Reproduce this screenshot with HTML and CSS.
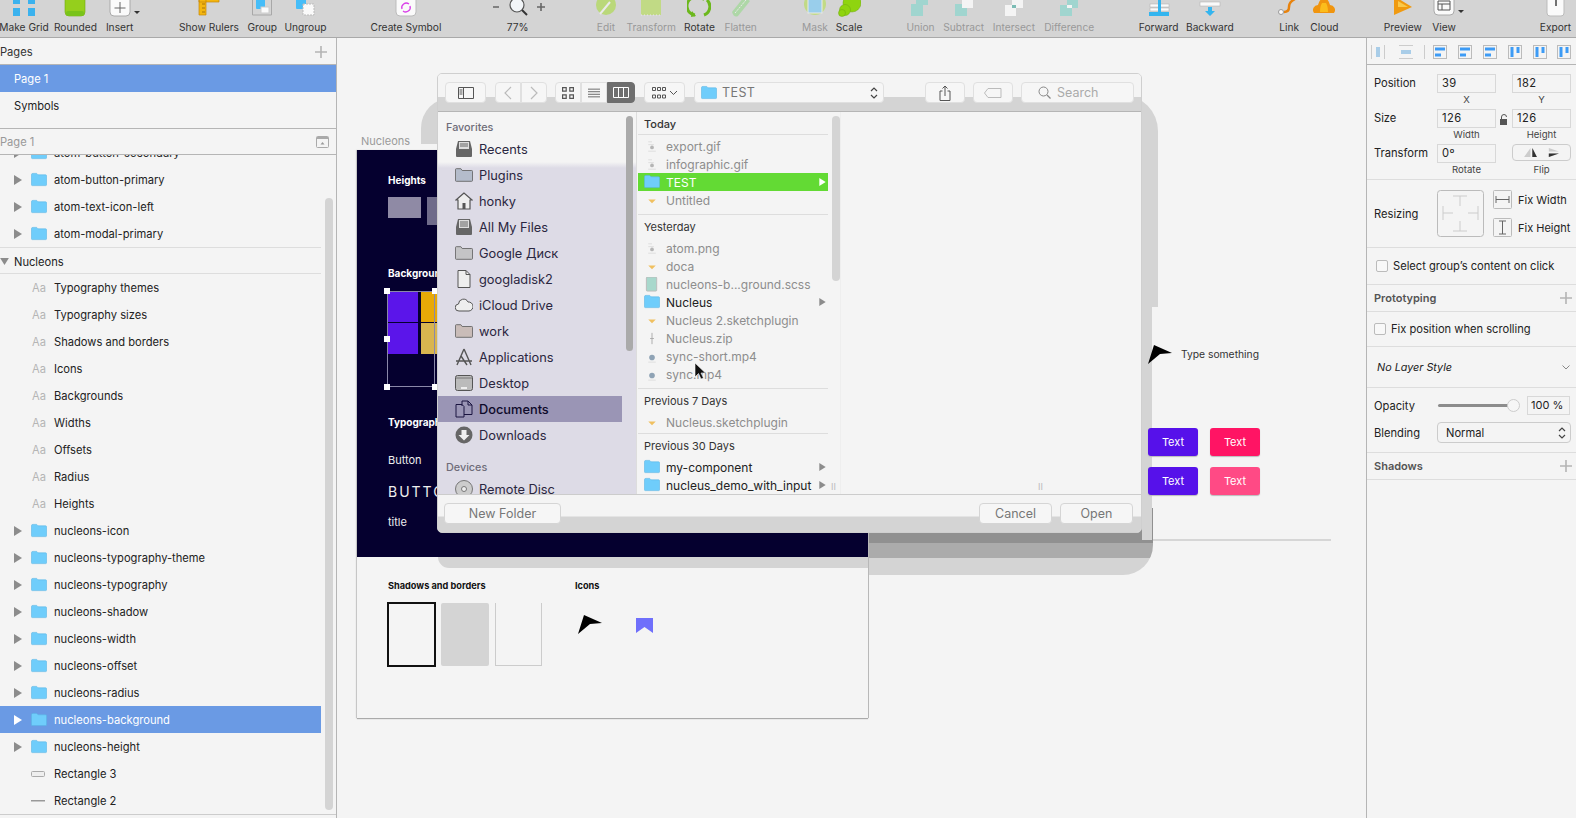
FILE: index.html
```html
<!DOCTYPE html>
<html>
<head>
    <meta charset="utf-8">
    <title>Sketch - Nucleus</title>
    <link rel="stylesheet" href="styles.css">
</head>
<body>
<svg class="defs" width="0" height="0">
    <symbol id="folder" viewBox="0 0 17 15">
        <path d="M.5 2.500Q.5 1 2 1h4l1.500 1.500h8q1 0 1 1V13q0 1-1 1H1.500q-1 0-1-1z" fill="#6fcdfb" stroke="#58b4e4" stroke-width=".6"/>
    </symbol>
    <symbol id="tri" viewBox="0 0 8 10"><path d="M0 0l8 5-8 5z"/></symbol>
    <symbol id="dfile" viewBox="0 0 14 16">
        <path d="M3 7h8l-4 4z" fill="#f0c060"/>
    </symbol>
    <symbol id="gfile" viewBox="0 0 14 16">
        <path d="M3 3h4M3 6h6M3 13h8" stroke="#ddd" fill="none"/><circle cx="7" cy="9" r="2" fill="#b5b5b5"/>
    </symbol>
    <symbol id="vfile" viewBox="0 0 14 16">
        <path d="M3 14h8" stroke="#ddd"/><circle cx="7" cy="9" r="3" fill="#8fa3b5"/>
    </symbol>
    <symbol id="gfolder" viewBox="0 0 20 16">
        <path d="M.5 14V2q0-1 1-1h5l1.500 2h10.500q1 0 1 1v10q0 1-1 1h-17q-1 0-1-1z" fill="currentColor" stroke="#666"/>
    </symbol>
    <symbol id="plus" viewBox="0 0 12 12"><path d="M6 0v12M0 6h12" stroke="#b4b4b4" stroke-width="1.600"/></symbol>
    <symbol id="alignh" viewBox="0 0 14 14">
        <rect x=".5" y=".5" width="13" height="13" fill="none" stroke="#bbb"/><rect x="2" y="2.500" width="10" height="3" fill="#3d9bf5"/><rect x="2" y="8.500" width="6" height="3" fill="#3d9bf5"/>
    </symbol>
    <symbol id="alignv" viewBox="0 0 14 14">
        <rect x=".5" y=".5" width="13" height="13" fill="none" stroke="#bbb"/><rect x="2.500" y="2" width="3" height="10" fill="#3d9bf5"/><rect x="8.500" y="2" width="3" height="6" fill="#3d9bf5"/>
    </symbol>
</svg>

<div class="toolbar">
    <div class="tool"><svg viewBox="0 0 24 17"><path d="M1 -3h7v7H1zM16-3h7v7h-7zM1 8h7v8H1zM16 8h7v8h-7z" fill="#3bb2ee"/></svg><span>Make Grid</span></div>
    <div class="tool"><svg viewBox="0 0 24 17"><rect x="2" y="-8" width="20" height="24" rx="4" fill="#95cf1c" stroke="#6ea80f" stroke-width=".6"/><rect x="3" y="11" width="18" height="5" rx="2" fill="#79c31a"/></svg><span>Rounded</span></div>
    <div class="tool"><svg viewBox="0 0 32 17"><rect x="2" y="-8" width="20" height="24" rx="4" fill="#fafafa" stroke="#aaa"/><path d="M12 2v11M6.500 8h11" stroke="#666"/><path d="M26 11h6l-3 3z" fill="#333"/></svg><span>Insert</span></div>
    <div class="tool"><svg viewBox="0 0 24 17"><path d="M2-4h7v19H2zM2-4h20v6H2z" fill="#f4b60f" stroke="#c4870a" stroke-width=".7"/><path d="M5 4h3M5 8h3M5 12h3" stroke="#a8740a"/></svg><span>Show Rulers</span></div>
    <div class="tool"><svg viewBox="0 0 24 17"><path d="M2.500-2v17h19V-2" fill="none" stroke="#a8a8a8"/><rect x="6" y="-4" width="9" height="13" rx="1" fill="#46bdf8"/><rect x="11" y="7" width="8" height="6" fill="#fafafa" stroke="#ccc"/></svg><span>Group</span></div>
    <div class="tool"><svg viewBox="0 0 24 17"><rect x="3" y="-4" width="10" height="13" rx="1" fill="#46bdf8"/><rect x="10" y="4" width="11" height="11" fill="#fafafa" stroke="#bbb" stroke-dasharray="2 1"/></svg><span>Ungroup</span></div>
    <div class="tool"><svg viewBox="0 0 24 17"><rect x="2" y="-6" width="20" height="22" rx="4" fill="#fafafa" stroke="#bbb"/><path d="M8 9a4.500 4.500 0 0 1 7-5M16 6a4.500 4.500 0 0 1-7 5" fill="none" stroke="#d93fe8" stroke-width="1.300"/></svg><span>Create Symbol</span></div>
    <div class="tool"><svg class="wide" viewBox="0 0 56 17"><path d="M3 7h6M47 7h8M51 3v8" stroke="#666" stroke-width="1.600" fill="none"/><circle cx="27" cy="5" r="7" fill="#f2f5f8" stroke="#555" stroke-width="1.200"/><path d="M32 10l5 5" stroke="#333" stroke-width="2"/></svg><span>77%</span></div>
    <div class="tool off"><svg viewBox="0 0 24 17"><circle cx="12" cy="5" r="10" fill="#b6d96b"/><path d="M6 14L16 2" stroke="#eee" stroke-width="2"/></svg><span>Edit</span></div>
    <div class="tool off"><svg viewBox="0 0 24 17"><rect x="2" y="-6" width="20" height="21" fill="#bedc78"/><path d="M2 15h20" stroke="#eee" stroke-dasharray="1 2"/></svg><span>Transform</span></div>
    <div class="tool on"><svg viewBox="0 0 24 17"><path d="M8 15A9 9 0 0 1 5-2M17 15a9 9 0 0 0 3-15" fill="none" stroke="#6cb81c" stroke-width="3"/><path d="M5 11l4 5-5 1zM14-4l5 2-3 3z" fill="#6cb81c"/></svg><span>Rotate</span></div>
    <div class="tool off"><svg viewBox="0 0 24 17"><path d="M3 12L15-3l6 4L9 16q-4 2-6-4z" fill="#a8d8a0"/><path d="M6 13L17 0" stroke="#eee" stroke-dasharray="2 1"/></svg><span>Flatten</span></div>
    <div class="tool off"><svg viewBox="0 0 24 17"><circle cx="12" cy="4" r="11" fill="#bedc78"/><rect x="5" y="-4" width="14" height="17" fill="#8fcdf0" stroke="#eee"/></svg><span>Mask</span></div>
    <div class="tool on"><svg viewBox="0 0 24 17"><circle cx="15" cy="3" r="9" fill="#8fd40f" stroke="#6ea80f" stroke-width=".5"/><circle cx="8" cy="10" r="5.500" fill="#8fd40f" stroke="#6ea80f" stroke-width=".5"/><circle cx="5" cy="13" r="3.500" fill="#8fd40f" stroke="#6ea80f" stroke-width=".5"/></svg><span>Scale</span></div>
    <div class="tool off"><svg viewBox="0 0 24 17"><path d="M8 4V-2h12v7h-5v11H3V4z" fill="#97d6cf"/></svg><span>Union</span></div>
    <div class="tool off"><svg viewBox="0 0 24 17"><path d="M3 4h12v12H3z" fill="#97d6cf"/><rect x="10" y="-3" width="11" height="11" fill="#fafafa"/></svg><span>Subtract</span></div>
    <div class="tool off"><svg viewBox="0 0 24 17"><rect x="3" y="5" width="11" height="11" fill="#fafafa"/><rect x="10" y="-3" width="11" height="11" fill="#fafafa"/><rect x="10" y="5" width="4" height="3" fill="#6db8b0"/></svg><span>Intersect</span></div>
    <div class="tool off"><svg viewBox="0 0 24 17"><path d="M3 5h12v11H3zM10-3h11v11H10z" fill="#97d6cf"/><rect x="10" y="5" width="5" height="3" fill="#fafafa"/></svg><span>Difference</span></div>
    <div class="tool on"><svg viewBox="0 0 24 17"><rect x="3" y="4" width="19" height="3" fill="#fafafa" stroke="#aaa" stroke-width=".5"/><rect x="3" y="8" width="19" height="3" fill="#fafafa" stroke="#aaa" stroke-width=".5"/><path d="M11-2h3v14h-3z" fill="#33b5ef"/><rect x="2" y="12" width="20" height="4" fill="#33b5ef"/></svg><span>Forward</span></div>
    <div class="tool on"><svg viewBox="0 0 24 17"><path d="M2-2h20v2H2z" fill="#33b5ef"/><rect x="2" y="2" width="20" height="4" fill="#fafafa" stroke="#aaa" stroke-width=".5"/><path d="M10 7h4v4h3l-5 5-5-5h3z" fill="#33b5ef"/></svg><span>Backward</span></div>
    <div class="tool on"><svg viewBox="0 0 24 17"><circle cx="4" cy="12" r="2.500" fill="#fafafa" stroke="#999"/><path d="M7 12q5 0 5-5t6-8" fill="none" stroke="#e8830d" stroke-width="2.500"/><path d="M18-2l5 2" stroke="#ddd" stroke-width="2"/></svg><span>Link</span></div>
    <div class="tool on"><svg viewBox="0 0 24 17"><path d="M2 13a5 5 0 0 1 4-8q2-7 6-7t6 7a5 5 0 0 1 4 8z" fill="#f0950f"/><path d="M8 12q0-6 2-9h4q2 3 2 9z" fill="#fbbd1c"/></svg><span>Cloud</span></div>
    <div class="tool on"><svg viewBox="0 0 24 17"><path d="M3-4l18 11L3 15z" fill="#f09a10"/><path d="M7 1l10 6H7z" fill="#fac94a"/></svg><span>Preview</span></div>
    <div class="tool on"><svg viewBox="0 0 32 17"><rect x="2" y="-6" width="20" height="21" rx="4" fill="#fafafa" stroke="#aaa"/><path d="M6 1h12v9H6zM6 4h12M10 4v6" fill="none" stroke="#555"/><path d="M26 10h6l-3 3z" fill="#333"/></svg><span>View</span></div>
    <div class="tool on"><svg viewBox="0 0 24 17"><rect x="3" y="-4" width="17" height="20" rx="3" fill="#fafafa" stroke="#bbb"/><path d="M12-4v10" stroke="#444" stroke-width="1.500"/></svg><span>Export</span></div>
</div>

<div class="main">
    <aside class="layers">
        <div class="panel-head">Pages<svg class="plus"><use href="#plus"/></svg></div>
        <div class="page-row selected">Page 1</div>
        <div class="page-row">Symbols</div>
        <div class="page-head">Page 1
            <svg class="collapse" viewBox="0 0 13 12"><rect x=".5" y=".5" width="12" height="11" rx="1" fill="#f4f4f4" stroke="#aaa"/><path d="M1 1h11v2H1z" fill="#aaa"/><path d="M4.500 8.500l2-2.500 2 2.500z" fill="#999"/></svg>
        </div>
        <div class="layer-list">
            <div class="layer clip-first"><svg class="tri"><use href="#tri"/></svg><svg class="ficon"><use href="#folder"/></svg>atom-button-secondary</div>
            <div class="layer"><svg class="tri"><use href="#tri"/></svg><svg class="ficon"><use href="#folder"/></svg>atom-button-primary</div>
            <div class="layer"><svg class="tri"><use href="#tri"/></svg><svg class="ficon"><use href="#folder"/></svg>atom-text-icon-left</div>
            <div class="layer"><svg class="tri"><use href="#tri"/></svg><svg class="ficon"><use href="#folder"/></svg>atom-modal-primary</div>
            <div class="layer-group"><svg class="tri down" viewBox="0 0 10 8"><path d="M0 0h10L5 8z"/></svg>Nucleons</div>
            <div class="layer"><span class="aa">Aa</span>Typography themes</div>
            <div class="layer"><span class="aa">Aa</span>Typography sizes</div>
            <div class="layer"><span class="aa">Aa</span>Shadows and borders</div>
            <div class="layer"><span class="aa">Aa</span>Icons</div>
            <div class="layer"><span class="aa">Aa</span>Backgrounds</div>
            <div class="layer"><span class="aa">Aa</span>Widths</div>
            <div class="layer"><span class="aa">Aa</span>Offsets</div>
            <div class="layer"><span class="aa">Aa</span>Radius</div>
            <div class="layer"><span class="aa">Aa</span>Heights</div>
            <div class="layer"><svg class="tri"><use href="#tri"/></svg><svg class="ficon"><use href="#folder"/></svg>nucleons-icon</div>
            <div class="layer"><svg class="tri"><use href="#tri"/></svg><svg class="ficon"><use href="#folder"/></svg>nucleons-typography-theme</div>
            <div class="layer"><svg class="tri"><use href="#tri"/></svg><svg class="ficon"><use href="#folder"/></svg>nucleons-typography</div>
            <div class="layer"><svg class="tri"><use href="#tri"/></svg><svg class="ficon"><use href="#folder"/></svg>nucleons-shadow</div>
            <div class="layer"><svg class="tri"><use href="#tri"/></svg><svg class="ficon"><use href="#folder"/></svg>nucleons-width</div>
            <div class="layer"><svg class="tri"><use href="#tri"/></svg><svg class="ficon"><use href="#folder"/></svg>nucleons-offset</div>
            <div class="layer"><svg class="tri"><use href="#tri"/></svg><svg class="ficon"><use href="#folder"/></svg>nucleons-radius</div>
            <div class="layer active"><svg class="tri"><use href="#tri"/></svg><svg class="ficon"><use href="#folder"/></svg>nucleons-background</div>
            <div class="layer"><svg class="tri"><use href="#tri"/></svg><svg class="ficon"><use href="#folder"/></svg>nucleons-height</div>
            <div class="layer"><svg class="ficon" viewBox="0 0 16 6"><rect x=".5" y=".5" width="13" height="5" rx="1" fill="#eee" stroke="#aaa"/></svg>Rectangle 3</div>
            <div class="layer"><svg class="ficon" viewBox="0 0 16 6"><rect y="2" width="14" height="1.500" fill="#999"/></svg>Rectangle 2</div>
        </div>
        <div class="layer-scroll"></div>
    </aside>

    <section class="canvas">
        <div class="shadow shadow-top"></div>
        <div class="shadow shadow-bottom"></div>
        <div class="shadow shadow-right"></div>
        <div class="shadow shadow-narrow"></div>
        <div class="shadow-line"></div>

        <div class="board-name">Nucleons</div>
        <div class="artboard">
            <div class="dark">
                <b class="lbl l-heights">Heights</b>
                <i class="hbox h1"></i><i class="hbox h2"></i>
                <b class="lbl l-bg">Backgrounds</b>
                <i class="swatch s1"></i><i class="swatch s2"></i><i class="swatch s3"></i><i class="swatch s4"></i>
                <i class="sel"></i>
                <i class="handle p1"></i><i class="handle p2"></i><i class="handle p3"></i><i class="handle p4"></i><i class="handle p5"></i>
                <b class="lbl l-typo">Typography</b>
                <span class="typo t-btn">Button</span>
                <span class="typo t-caps">BUTTON</span>
                <span class="typo t-title">title</span>
            </div>
            <div class="light">
                <div class="shadow-light"></div>
                <b class="lbl-dark l-shadows">Shadows and borders</b>
                <b class="lbl-dark l-icons">Icons</b>
                <i class="sample b1"></i><i class="sample b2"></i><i class="sample b3"></i>
                <svg class="cursor-icon" viewBox="0 0 25 19"><path d="M7 0l18 8-12 1-12 10z" fill="#000"/></svg>
                <svg class="ribbon" viewBox="0 0 17 15"><path d="M0 0h17v15l-8.500-6L0 15z" fill="#6f6ffb"/></svg>
            </div>
        </div>

        <svg class="cursor-icon type-arrow" viewBox="0 0 25 19"><path d="M7 0l18 8-12 1-12 10z" fill="#000"/></svg>
        <div class="type-text">Type something</div>
        <div class="btn-grid">
            <div class="cbtn purple">Text</div><div class="cbtn pink">Text</div>
            <div class="cbtn purple">Text</div><div class="cbtn pink soft">Text</div>
        </div>

        <div class="dialog">
            <div class="dlg-bar">
                <div class="dbtn w-side"><svg viewBox="0 0 16 12"><path d="M.5.500h15v11H.5zM5.500.5v11M1.500 3h3M1.500 5h3M1.500 7h3" fill="none" stroke="#555"/></svg></div>
                <div class="seg seg-nav">
                    <div class="dbtn w-nav"><svg viewBox="0 0 8 14"><path d="M7 1L1 7l6 6" fill="none" stroke="#bbb" stroke-width="1.200"/></svg></div>
                    <div class="dbtn w-nav"><svg viewBox="0 0 8 14"><path d="M1 1l6 6-6 6" fill="none" stroke="#bbb" stroke-width="1.200"/></svg></div>
                </div>
                <div class="seg seg-view">
                    <div class="dbtn w-view"><svg viewBox="0 0 10 10"><path d="M.5.500h3v3h-3zM6.500.5h3v3h-3zM.5 6.500h3v3h-3zM6.500 6.500h3v3h-3z" fill="none" stroke="#555"/></svg></div>
                    <div class="dbtn w-view"><svg viewBox="0 0 14 11"><path d="M0 1h14M0 4h14M0 7h14M0 10h14" stroke="#555"/></svg></div>
                    <div class="dbtn w-col"><svg viewBox="0 0 16 11"><path d="M.5.500h15v10H.5zM5.500.5v10M10.500.5v10" fill="none" stroke="#fff"/></svg></div>
                </div>
                <div class="dbtn w-arr"><svg viewBox="0 0 26 12"><path d="M.5.500h3v3h-3zM5.500.5h3v3h-3zM10.500.5h3v3h-3zM.5 8h3v3h-3zM5.500 8h3v3h-3zM10.500 8h3v3h-3zM18 4l3.500 3.500L25 4" fill="none" stroke="#555"/></svg></div>
                <div class="dbtn w-path"><svg class="pf" viewBox="0 0 17 15"><use href="#folder"/></svg><span>TEST</span><svg class="updown" viewBox="0 0 8 14"><path d="M1 5l3-3 3 3M1 9l3 3 3-3" fill="none" stroke="#444" stroke-width="1.200"/></svg></div>
                <div class="dbtn w-share"><svg viewBox="0 0 12 16"><path d="M3.500 6H1v9.500h10V6H8.500M6 11V1M3.500 3.500L6 1l2.500 2.500" fill="none" stroke="#555"/></svg></div>
                <div class="dbtn w-tag"><svg viewBox="0 0 18 10"><path d="M4 .5h13v9H4L.5 5z" fill="none" stroke="#bbb"/></svg></div>
                <div class="dbtn w-search"><svg viewBox="0 0 13 13"><circle cx="5.500" cy="5.500" r="4.500" fill="none" stroke="#888"/><path d="M9 9l3.500 3.500" stroke="#888" stroke-width="1.200"/></svg><span>Search</span></div>
            </div>

            <div class="dlg-body">
                <div class="side">
                    <div class="side-title">Favorites</div>
                    <div class="side-row"><svg viewBox="0 0 18 18"><path d="M1 9l2-8h12l2 8v7q0 1-1 1H2q-1 0-1-1z" fill="#666"/><path d="M4 2h10v7H4z" fill="#ddd"/><path d="M5 4h8M5 6h8" stroke="#666"/></svg>Recents</div>
                    <div class="side-row"><svg class="c-blue" viewBox="0 0 20 16"><use href="#gfolder"/></svg>Plugins</div>
                    <div class="side-row"><svg viewBox="0 0 18 18"><path d="M9 1L1 8h2v9h12V8h2z" fill="#eee" stroke="#555" stroke-width="1.200"/><rect x="7.500" y="11" width="3" height="6" fill="#555"/></svg>honky</div>
                    <div class="side-row"><svg viewBox="0 0 18 18"><path d="M1 9l2-8h12l2 8v7q0 1-1 1H2q-1 0-1-1z" fill="#666"/><path d="M4 2h10v8H4z" fill="#ddd"/><path d="M5 4h8M5 6h8M5 8h8" stroke="#666"/></svg>All My Files</div>
                    <div class="side-row"><svg class="c-gray" viewBox="0 0 20 16"><use href="#gfolder"/></svg>Google Диск</div>
                    <div class="side-row"><svg viewBox="0 0 18 18"><path d="M3 .5h8l4 4v13H3z" fill="#eee" stroke="#555"/><path d="M11 .5v4h4" fill="none" stroke="#555"/></svg>googladisk2</div>
                    <div class="side-row"><svg viewBox="0 0 18 14"><path d="M4 13a3.500 3.500 0 0 1-.5-7A5 5 0 0 1 13 4a4.500 4.500 0 0 1 1 9z" fill="#eee" stroke="#555"/></svg>iCloud Drive</div>
                    <div class="side-row"><svg class="c-tan" viewBox="0 0 20 16"><use href="#gfolder"/></svg>work</div>
                    <div class="side-row"><svg viewBox="0 0 18 18"><path d="M9 1L2 17M9 1l7 16M1 13h16M6 8l6 9" fill="none" stroke="#555" stroke-width="1.400"/></svg>Applications</div>
                    <div class="side-row"><svg viewBox="0 0 18 16"><rect x=".5" y=".5" width="17" height="15" rx="2" fill="#bbb" stroke="#555"/><path d="M1 3h16" stroke="#777"/><path d="M6 12h6v2H6z" fill="#eee"/></svg>Desktop</div>
                    <div class="side-row current"><svg viewBox="0 0 18 18"><path d="M1 4.500h6l2 2V17H1zM7 1h6l4 4v9.500H9" fill="none" stroke="#1a1440"/><path d="M7 1v5M13 1v4h4" fill="none" stroke="#1a1440"/></svg>Documents</div>
                    <div class="side-row"><svg viewBox="0 0 18 18"><circle cx="9" cy="9" r="8.500" fill="#666"/><path d="M6.500 4h5v5h3L9 14.500 3.500 9h3z" fill="#eee"/></svg>Downloads</div>
                    <div class="side-title devices">Devices</div>
                    <div class="side-row"><svg viewBox="0 0 18 18"><circle cx="9" cy="9" r="8.500" fill="#ccc" stroke="#777"/><circle cx="9" cy="9" r="2.500" fill="#eee" stroke="#777"/></svg>Remote Disc</div>
                    <div class="side-scroll"></div>
                </div>
                <div class="recent">
                    <div class="date first">Today</div>
                    <div class="file"><svg><use href="#gfile"/></svg>export.gif</div>
                    <div class="file"><svg><use href="#gfile"/></svg>infographic.gif</div>
                    <div class="file chosen"><svg class="big"><use href="#folder"/></svg>TEST<svg class="more"><use href="#tri"/></svg></div>
                    <div class="file"><svg><use href="#dfile"/></svg>Untitled</div>
                    <div class="date">Yesterday</div>
                    <div class="file"><svg><use href="#gfile"/></svg>atom.png</div>
                    <div class="file"><svg><use href="#dfile"/></svg>doca</div>
                    <div class="file"><svg viewBox="0 0 14 16"><rect x="1" y="0" width="11" height="15" rx="1" fill="#a8d8cc" stroke="#bbb"/></svg>nucleons-b...ground.scss</div>
                    <div class="file dir"><svg class="big"><use href="#folder"/></svg>Nucleus<svg class="more"><use href="#tri"/></svg></div>
                    <div class="file"><svg><use href="#dfile"/></svg>Nucleus 2.sketchplugin</div>
                    <div class="file"><svg viewBox="0 0 14 16"><path d="M7 2v12M5 8h4" stroke="#aaa"/></svg>Nucleus.zip</div>
                    <div class="file"><svg><use href="#vfile"/></svg>sync-short.mp4</div>
                    <div class="file"><svg><use href="#vfile"/></svg>sync.mp4</div>
                    <div class="date">Previous 7 Days</div>
                    <div class="file"><svg><use href="#dfile"/></svg>Nucleus.sketchplugin</div>
                    <div class="date tight">Previous 30 Days</div>
                    <div class="file dir"><svg class="big"><use href="#folder"/></svg>my-component<svg class="more"><use href="#tri"/></svg></div>
                    <div class="file dir"><svg class="big"><use href="#folder"/></svg>nucleus_demo_with_input<svg class="more"><use href="#tri"/></svg></div>
                    <div class="recent-scroll"></div>
                    <div class="grip g-a">II</div>
                </div>
                <div class="empty-col"><div class="grip g-b">II</div></div>
            </div>

            <div class="dlg-foot">
                <div class="fbtn new">New Folder</div>
                <div class="fbtn cancel">Cancel</div>
                <div class="fbtn">Open</div>
            </div>
        </div>

        <svg class="pointer" viewBox="0 0 11 17"><path d="M1 0v14l3.500-3.500L7 16l2.500-1-2.500-5h4.500z" fill="#111" stroke="#fff" stroke-width=".6"/></svg>
    </section>

    <aside class="inspector">
        <div class="align-row">
            <svg class="ali dim" viewBox="0 0 14 14"><path d="M.5 0v14M13.500 0v14" stroke="#ccc"/><rect x="5" y="2" width="4" height="10" fill="#a9cde8"/></svg>
            <svg class="ali dim gap" viewBox="0 0 14 14"><path d="M0 .5h14M0 13.500h14" stroke="#ccc"/><rect x="2" y="5" width="10" height="4" fill="#a9cde8"/></svg>
            <i class="vsep"></i>
            <svg class="ali"><use href="#alignh"/></svg>
            <svg class="ali"><use href="#alignh"/></svg>
            <svg class="ali"><use href="#alignh"/></svg>
            <svg class="ali"><use href="#alignv"/></svg>
            <svg class="ali"><use href="#alignv"/></svg>
            <svg class="ali"><use href="#alignv"/></svg>
        </div>
        <div class="geo">
            <div class="geo-row">
                <label>Position</label>
                <div class="field"><div class="inp">39</div><small>X</small></div>
                <i class="lock"></i>
                <div class="field"><div class="inp">182</div><small>Y</small></div>
            </div>
            <div class="geo-row">
                <label>Size</label>
                <div class="field"><div class="inp">126</div><small>Width</small></div>
                <svg class="lock" viewBox="0 0 8 11"><path d="M1.500 5V3a2.500 2.500 0 0 1 5 0" fill="none" stroke="#555"/><rect y="5" width="7" height="6" fill="#555"/></svg>
                <div class="field"><div class="inp">126</div><small>Height</small></div>
            </div>
            <div class="geo-row">
                <label>Transform</label>
                <div class="field"><div class="inp">0º</div><small>Rotate</small></div>
                <i class="lock"></i>
                <div class="field"><div class="flip"><svg viewBox="0 0 42 12"><path d="M9 1v10H2zM11 1v10h5z" fill="#ccc"/><path d="M11 1l5 10h-5z" fill="#333"/><path d="M29 1l11 4H29zM29 7h11l-11 4z" fill="#ccc"/><path d="M29 7h11l-11 4z" fill="#333"/></svg></div><small>Flip</small></div>
            </div>
        </div>
        <div class="resize">
            <label>Resizing</label>
            <svg class="resize-box" viewBox="0 0 47 47"><rect x=".5" y=".5" width="46" height="46" rx="3" fill="none" stroke="#bbb"/><path d="M16 6h14M23 6v10M16 41h14M23 41V31M6 16v14M6 23h10M41 16v14M41 23H31" fill="none" stroke="#ccc"/></svg>
            <div class="fix-col">
                <div class="fix"><svg viewBox="0 0 19 19"><rect x=".5" y=".5" width="18" height="18" rx="1" fill="none" stroke="#bbb"/><path d="M3 6v7M16 6v7M3 9.500h13" stroke="#666"/></svg>Fix Width</div>
                <div class="fix"><svg viewBox="0 0 19 19"><rect x=".5" y=".5" width="18" height="18" rx="1" fill="none" stroke="#bbb"/><path d="M6 3h7M6 16h7M9.500 3v13" stroke="#666"/></svg>Fix Height</div>
            </div>
        </div>
        <div class="check-row select-row"><i class="check"></i>Select group’s content on click</div>
        <div class="sec-head">Prototyping<svg class="plus"><use href="#plus"/></svg></div>
        <div class="check-row fix-row"><i class="check"></i>Fix position when scrolling</div>
        <div class="style-row"><em>No Layer Style</em><svg viewBox="0 0 8 5"><path d="M.5.500L4 4 7.500.5" fill="none" stroke="#888"/></svg></div>
        <div class="blend">
            <div class="blend-row">
                <label>Opacity</label>
                <div class="slider"><i></i></div>
                <div class="pct">100 %</div>
            </div>
            <div class="blend-row">
                <label>Blending</label>
                <div class="select">Normal<svg viewBox="0 0 8 14"><path d="M1 5l3-3 3 3M1 9l3 3 3-3" fill="none" stroke="#444" stroke-width="1.200"/></svg></div>
            </div>
        </div>
        <div class="sec-head shadows">Shadows<svg class="plus"><use href="#plus"/></svg></div>
    </aside>
</div>
</body>
</html>
```

FILE: styles.css
```css
* {
    box-sizing: border-box;
}
html, body {
    margin: 0;
    height: 818px;
    overflow: hidden;
}
body {
    background: #f4f4f4;
    color: #222;
    font-family: Inter, "Noto Sans", sans-serif;
    font-size: 11.15px;
}
.defs {
    position: absolute;
}

/* Top toolbar */
.toolbar {
    display: grid;
    grid-template-columns: 51.4px 44.2px 89.4px 53.3px 43.2px 100.5px 111.6px 88.4px 45.3px 48.2px 41.2px 74.3px 34.2px 71.4px 43.2px 50.2px 55.3px 89.5px 51.2px 79.4px 35.2px 78.4px 41.2px 111.5px 20px;
    height: 38px;
    padding-left: 24px;
    background: #d4d4d4;
    border-bottom: 1px solid #a9a9a9;
    overflow: hidden;
}
.tool {
    display: flex;
    flex-direction: column;
    align-items: center;
    width: 0;
    justify-self: start;
    color: #333;
    font-size: 10.2px;
    white-space: nowrap;
}
.tool svg {
    width: 24px;
    height: 17px;
    flex: none;
    overflow: hidden;
}
.tool svg[viewBox="0 0 32 17"] {
    width: 32px;
    margin-left: 8px;
}
.tool svg.wide {
    width: 56px;
}
.tool span {
    margin-top: 4px;
}
.tool.off {
    color: #999;
}
.tool.off svg {
    opacity: .85;
}
.tool.on {
    color: #333;
}

.main {
    display: flex;
    height: 780px;
}

/* Layer list */
.layers {
    position: relative;
    width: 337px;
    flex: none;
    border-right: 1px solid #b5b5b5;
    overflow: hidden;
}
.panel-head {
    display: flex;
    align-items: center;
    justify-content: space-between;
    height: 27px;
    padding: 2px 9px 0 0;
    border-bottom: 1px solid #b5b5b5;
    color: #333;
}
.plus {
    width: 12px;
    height: 12px;
}
.page-row {
    height: 27px;
    line-height: 29px;
    padding-left: 14px;
    color: #222;
}
.page-row.selected {
    background: #6a9ae4;
    color: #fff;
}
.page-head {
    display: flex;
    align-items: center;
    justify-content: space-between;
    height: 27px;
    margin-top: 9px;
    padding-right: 7px;
    border-top: 1px solid #b5b5b5;
    border-bottom: 1px solid #b5b5b5;
    color: #999;
}
.collapse {
    width: 13px;
    height: 12px;
}
.layer-list {
    height: 660px;
    overflow: hidden;
    border-bottom: 1px solid #ccc;
}
.layer-scroll {
    position: absolute;
    left: 325px;
    top: 160px;
    width: 8px;
    height: 612px;
    border-radius: 4px;
    background: #d4d4d4;
}
.layer {
    display: flex;
    align-items: center;
    width: 321px;
    height: 27px;
    padding-left: 54px;
    position: relative;
    white-space: nowrap;
}
.clip-first {
    margin-top: -16px;
}
.tri {
    position: absolute;
    left: 14px;
    top: 9px;
    width: 8px;
    height: 10px;
    fill: #8c8c8c;
}
.tri.down {
    left: 0;
    top: 10px;
    width: 9px;
    height: 7px;
}
.ficon {
    position: absolute;
    left: 31px;
    top: 6px;
    width: 16px;
    height: 15px;
}
.ficon[viewBox="0 0 16 6"] {
    top: 11px;
    height: 6px;
}
.aa {
    position: absolute;
    left: 32px;
    color: #b5b5b5;
}
.layer-group {
    position: relative;
    width: 321px;
    height: 27px;
    line-height: 28px;
    padding-left: 14px;
    border-top: 1px solid #ddd;
    border-bottom: 1px solid #ddd;
}
.layer.active {
    background: #6a9ae4;
    color: #fff;
}
.layer.active .tri {
    fill: #fff;
}

/* Free canvas */
.canvas {
    position: relative;
    flex: 1;
    overflow: hidden;
    background: #f4f4f4;
}
.canvas > * {
    position: absolute;
}
.shadow {
    background: #d4d4d4;
}
.shadow-top {
    left: 84px;
    top: 60px;
    width: 60px;
    height: 46px;
    border-radius: 30px 0 0 0;
}
.shadow-right {
    left: 770px;
    top: 57px;
    width: 51px;
    height: 212px;
    border-radius: 0 36px 0 0;
}
.shadow-narrow {
    left: 805px;
    top: 260px;
    width: 10px;
    height: 242px;
}
.shadow-bottom {
    left: 100px;
    top: 470px;
    width: 716px;
    height: 67px;
    border-radius: 0 0 30px 30px;
    background: linear-gradient(#909090 0, #909090 35px, #ababab 35px, #ababab 50px, #d4d4d4 50px);
}
.shadow-line {
    left: 816px;
    top: 501px;
    width: 178px;
    height: 2px;
    background: #d6d6d6;
}
.board-name {
    left: 24px;
    top: 96px;
    color: #9a9a9a;
    font-size: 11px;
}
.artboard {
    left: 20px;
    top: 112px;
    width: 511px;
    height: 568px;
    display: flex;
    flex-direction: column;
    box-shadow: 0 1px 1px #aaa, -1px 0 1px #ccc, 1px 0 0 #bbb;
}
.artboard > div {
    position: relative;
}
.dark {
    height: 407px;
    background: #05002f;
    color: #fff;
}
.light {
    flex: 1;
    background: #f4f4f4;
}
.dark > *, .light > * {
    position: absolute;
}
.shadow-light {
    left: 81px;
    right: 0;
    top: 0;
    height: 11px;
    background: #d4d4d4;
    border-radius: 0 0 0 14px;
}
.lbl {
    font-size: 10px;
    left: 31px;
}
.l-heights { top: 24px; }
.l-bg { top: 117px; }
.l-typo { top: 266px; }
.hbox { top: 47px; height: 21px; }
.h1 { left: 31px; width: 33px; background: #8f8aa5; }
.h2 { left: 70px; width: 40px; height: 28px; background: #6f6b8a; }
.swatch { width: 31px; height: 31px; }
.s1 { left: 30px; top: 141px; background: #5b15ea; }
.s2 { left: 64px; top: 141px; background: #e8a907; }
.s3 { left: 30px; top: 173px; background: #5b15ea; }
.s4 { left: 64px; top: 173px; background: #d9b54f; }
.sel {
    left: 30px;
    top: 141px;
    width: 48px;
    height: 96px;
    border: 1px solid #8a88a8;
}
.handle {
    width: 6px;
    height: 6px;
    background: #fff;
}
.p1 { left: 27px; top: 138px; }
.p2 { left: 75px; top: 138px; }
.p3 { left: 27px; top: 186px; }
.p4 { left: 27px; top: 234px; }
.p5 { left: 75px; top: 234px; }
.typo {
    left: 31px;
    font-size: 11px;
    color: #eee;
}
.t-btn { top: 303px; }
.t-caps { top: 333px; font-size: 14px; letter-spacing: 2px; }
.t-title { top: 365px; }
.lbl-dark {
    top: 23px;
    font-size: 9.2px;
    color: #111;
}
.l-shadows { left: 31px; }
.l-icons { left: 218px; }
.sample { top: 46px; height: 63px; }
.b1 { left: 30px; width: 49px; height: 65px; top: 45px; border: 2px solid #111; }
.b2 { left: 84px; width: 48px; background: #d4d4d4; border-radius: 2px; }
.b3 { left: 138px; width: 47px; border: 1px solid #ccc; border-top: 0; }
.cursor-icon { width: 25px; height: 19px; }
.light .cursor-icon { left: 220px; top: 58px; }
.ribbon { left: 279px; top: 61px; width: 17px; height: 15px; }
.type-arrow { left: 810px; top: 307px; }
.type-text { left: 844px; top: 310px; font-size: 10.3px; color: #333; }
.btn-grid {
    left: 811px;
    top: 390px;
    display: grid;
    grid-template-columns: 50px 50px;
    grid-auto-rows: 28px;
    column-gap: 12px;
    row-gap: 11px;
}
.cbtn {
    display: flex;
    align-items: center;
    justify-content: center;
    border-radius: 3px;
    color: #fff;
    font-size: 11px;
    box-shadow: 0 1px 1px #bbb;
}
.purple { background: #5611ea; }
.pink { background: #ff1464; }
.pink.soft { background: #ff4a85; }

/* Open dialog */
.dialog {
    left: 100px;
    top: 35px;
    width: 705px;
    height: 460px;
    display: flex;
    flex-direction: column;
    border: 1px solid #cfcfcf;
    border-radius: 5px;
    overflow: hidden;
    background: #f4f4f4;
}
.dlg-bar {
    display: flex;
    align-items: flex-start;
    height: 38px;
    padding: 8px 0 0 7px;
    background: linear-gradient(#f4f4f4 0, #f4f4f4 23px, #d4d4d4 23px);
    border-bottom: 1px solid #b5b5b5;
    flex: none;
}
.dbtn {
    display: flex;
    align-items: center;
    justify-content: center;
    height: 21px;
    background: #f6f6f6;
    border: 1px solid #e0e0e0;
    border-radius: 4px;
    flex: none;
}
.seg {
    display: flex;
}
.seg .dbtn {
    border-radius: 0;
}
.seg .dbtn:first-child {
    border-radius: 4px 0 0 4px;
}
.seg .dbtn:last-child {
    border-radius: 0 4px 4px 0;
}
.w-side { width: 41px; }
.w-side svg { width: 16px; height: 12px; }
.seg-nav { margin-left: 9px; }
.w-nav { width: 26px; }
.w-nav svg { width: 8px; height: 14px; }
.seg-view { margin-left: 8px; }
.w-view { width: 26px; }
.w-view svg { width: 12px; height: 12px; }
.w-col { width: 28px; background: #6e6e6e; border-color: #6e6e6e; }
.w-col svg { width: 16px; height: 11px; }
.w-arr { width: 41px; margin-left: 9px; }
.w-arr svg { width: 26px; height: 12px; }
.w-path {
    width: 190px;
    margin-left: 9px;
    justify-content: flex-start;
    padding: 0 5px 0 6px;
    color: #777;
    font-size: 12.5px;
    letter-spacing: .4px;
}
.pf { width: 16px; height: 15px; margin-right: 5px; }
.updown { width: 8px; height: 14px; margin-left: auto; }
.w-share { width: 40px; margin-left: 41px; }
.w-share svg { width: 12px; height: 16px; }
.w-tag { width: 40px; margin-left: 8px; }
.w-tag svg { width: 18px; height: 10px; }
.w-search {
    width: 113px;
    margin-left: 8px;
    justify-content: flex-start;
    padding-left: 16px;
    color: #aaa;
    font-size: 12.5px;
}
.w-search svg { width: 13px; height: 13px; margin-right: 6px; }

.dlg-body {
    display: flex;
    height: 382px;
    flex: none;
    overflow: hidden;
}
.side {
    position: relative;
    width: 198px;
    flex: none;
    padding: 6px 0 0 0;
    background: linear-gradient(#f4f4f4 0, #f4f4f4 50px, #dddbe6 56px);
    font-size: 12.8px;
    color: #2a2640;
    overflow: hidden;
}
.side-title {
    height: 18px;
    line-height: 19px;
    padding-left: 8px;
    font-size: 10.8px;
    font-weight: 500;
    color: #6e6c78;
}
.devices {
    height: 28px;
    line-height: 40px;
}
.side-row {
    display: flex;
    align-items: center;
    width: 184px;
    height: 26px;
    padding-left: 17px;
    white-space: nowrap;
}
.side-row svg {
    width: 18px;
    height: 18px;
    margin-right: 6px;
    flex: none;
}
.side-row.current {
    background: #9a95b5;
    color: #0e0a2a;
    font-weight: 500;
}
.c-blue { color: #b4bccb; }
.c-gray { color: #c4c4c6; }
.c-tan { color: #c9bcb8; }
.side-scroll {
    position: absolute;
    left: 188px;
    top: 4px;
    width: 7px;
    height: 235px;
    border-radius: 4px;
    background: #aaa;
}
.recent {
    position: relative;
    width: 204px;
    flex: none;
    padding-left: 1px;
    border-left: 1px solid #ddd;
    overflow: hidden;
}
.date {
    width: 190px;
    height: 25px;
    line-height: 25px;
    margin-top: 5px;
    padding-left: 6px;
    font-size: 11px;
    color: #333;
    border-top: 1px solid #ddd;
}
.date.tight {
    margin-top: 2px;
}
.date.first {
    margin-top: 0;
    margin-bottom: 2px;
    height: 23px;
    border-top: 0;
    border-bottom: 1px solid #ddd;
    font-weight: 500;
}
.file {
    position: relative;
    display: flex;
    align-items: center;
    width: 190px;
    height: 18px;
    padding-left: 28px;
    font-size: 12px;
    color: #8d8d8d;
    white-space: nowrap;
}
.file svg {
    position: absolute;
    left: 7px;
    top: 2px;
    width: 14px;
    height: 15px;
}
.file svg.big {
    left: 6px;
    top: 1px;
    width: 16px;
}
.file svg.more {
    left: auto;
    right: 2px;
    top: 5px;
    width: 7px;
    height: 8px;
    fill: #8c8c8c;
}
.file.dir {
    color: #222;
}
.file.chosen {
    background: #63da34;
    color: #fff;
}
.file.chosen svg.more {
    fill: #fff;
}
.recent-scroll {
    position: absolute;
    left: 195px;
    top: 4px;
    width: 8px;
    height: 165px;
    border-radius: 4px;
    background: #d4d4d4;
}
.grip {
    position: absolute;
    bottom: 2px;
    font-size: 9px;
    color: #bbb;
}
.g-a { left: 194px; }
.g-b { left: 197px; }
.empty-col {
    position: relative;
    flex: 1;
    border-left: 1px solid #eee;
}
.dlg-foot {
    display: flex;
    align-items: flex-start;
    height: 40px;
    padding: 8px 8px 0 6px;
    background: linear-gradient(#f4f4f4 0, #f4f4f4 21px, #d4d4d4 22px);
    border-top: 1px solid #ccc;
}
.fbtn {
    display: flex;
    align-items: center;
    justify-content: center;
    width: 73px;
    height: 21px;
    margin-left: 8px;
    background: #f6f6f6;
    border: 1px solid #d5d5d5;
    border-radius: 4px;
    font-size: 12.5px;
    color: #777;
}
.fbtn.new {
    width: 117px;
    margin: 0;
}
.fbtn.cancel {
    margin-left: auto;
}
.pointer {
    left: 357px;
    top: 325px;
    width: 11px;
    height: 17px;
}

/* Inspector */
.inspector {
    width: 210px;
    flex: none;
    border-left: 1px solid #b5b5b5;
    overflow: hidden;
    background: #f4f4f4;
}
.align-row {
    display: flex;
    align-items: center;
    height: 27px;
    padding: 1px 0 0 4px;
    gap: 10.8px;
    border-bottom: 1px solid #b5b5b5;
}
.ali {
    width: 14px;
    height: 14px;
    flex: none;
}
.ali.gap {
    margin-left: 3px;
}
.vsep {
    width: 1px;
    height: 14px;
    margin-right: -2px;
    background: #ccc;
}
.geo {
    padding: 9px 5px 0 7px;
    height: 115px;
    border-bottom: 1px solid #ddd;
}
.geo-row {
    display: flex;
    align-items: flex-start;
    height: 35px;
}
.geo-row label {
    width: 63px;
    line-height: 19px;
}
.field {
    width: 59px;
    text-align: center;
}
.inp {
    height: 19px;
    line-height: 17px;
    padding-left: 4px;
    border: 1px solid #d8d8d8;
    text-align: left;
    letter-spacing: .4px;
}
.field small {
    display: block;
    font-size: 9.6px;
    line-height: 13px;
    color: #444;
}
.lock {
    width: 16px;
    height: 11px;
    margin-top: 5px;
    padding: 0 4px;
    flex: none;
}
.flip {
    height: 17px;
    border: 1px solid #ccc;
    border-radius: 4px;
    padding: 2px 6px;
    margin-bottom: 2px;
}
.flip svg {
    display: block;
    width: 100%;
    height: 11px;
}
.resize {
    position: relative;
    display: flex;
    align-items: center;
    height: 68px;
    padding-left: 7px;
    border-bottom: 1px solid #ddd;
}
.resize label {
    width: 63px;
}
.resize-box {
    width: 47px;
    height: 47px;
}
.fix-col {
    display: flex;
    flex-direction: column;
    gap: 9px;
    margin-left: 9px;
}
.fix {
    display: flex;
    align-items: center;
    gap: 6px;
    font-size: 11px;
    white-space: nowrap;
}
.fix svg {
    width: 19px;
    height: 19px;
}
.check-row {
    display: flex;
    align-items: center;
    gap: 5px;
    white-space: nowrap;
}
.select-row {
    height: 37px;
    padding-left: 9px;
    border-bottom: 1px solid #ddd;
}
.fix-row {
    height: 35px;
    padding-left: 7px;
    border-bottom: 1px solid #ddd;
}
.check {
    width: 12px;
    height: 12px;
    border: 1px solid #bbb;
    border-radius: 2px;
    background: #f8f8f8;
    flex: none;
}
.sec-head {
    display: flex;
    align-items: center;
    justify-content: space-between;
    height: 27px;
    padding: 0 4px 0 7px;
    border-bottom: 1px solid #ddd;
    font-size: 11px;
    font-weight: 600;
    color: #555;
}
.style-row {
    display: flex;
    align-items: center;
    justify-content: space-between;
    height: 41px;
    padding: 0 6px 0 10px;
    border-bottom: 1px solid #ddd;
    font-size: 10.8px;
}
.style-row svg {
    width: 8px;
    height: 5px;
}
.blend {
    height: 65px;
    padding: 7px 5px 0 7px;
    border-bottom: 1px solid #ddd;
}
.blend-row {
    display: flex;
    align-items: center;
    height: 21px;
    margin-bottom: 6px;
}
.blend-row label {
    width: 63px;
}
.slider {
    position: relative;
    width: 75px;
    height: 3px;
    margin: 0 14px 0 1px;
    background: #8c8c8c;
    border-radius: 2px;
}
.slider i {
    position: absolute;
    right: -7px;
    top: -5px;
    width: 13px;
    height: 13px;
    border-radius: 50%;
    background: #f6f6f6;
    border: 1px solid #ccc;
}
.pct {
    width: 43px;
    height: 19px;
    line-height: 17px;
    padding-left: 3px;
    border: 1px solid #d8d8d8;
    font-size: 11px;
    white-space: nowrap;
}
.select {
    display: flex;
    align-items: center;
    justify-content: space-between;
    width: 134px;
    height: 21px;
    padding: 0 4px 0 8px;
    border: 1px solid #ccc;
    border-radius: 4px;
}
.select svg {
    width: 8px;
    height: 14px;
}
```
